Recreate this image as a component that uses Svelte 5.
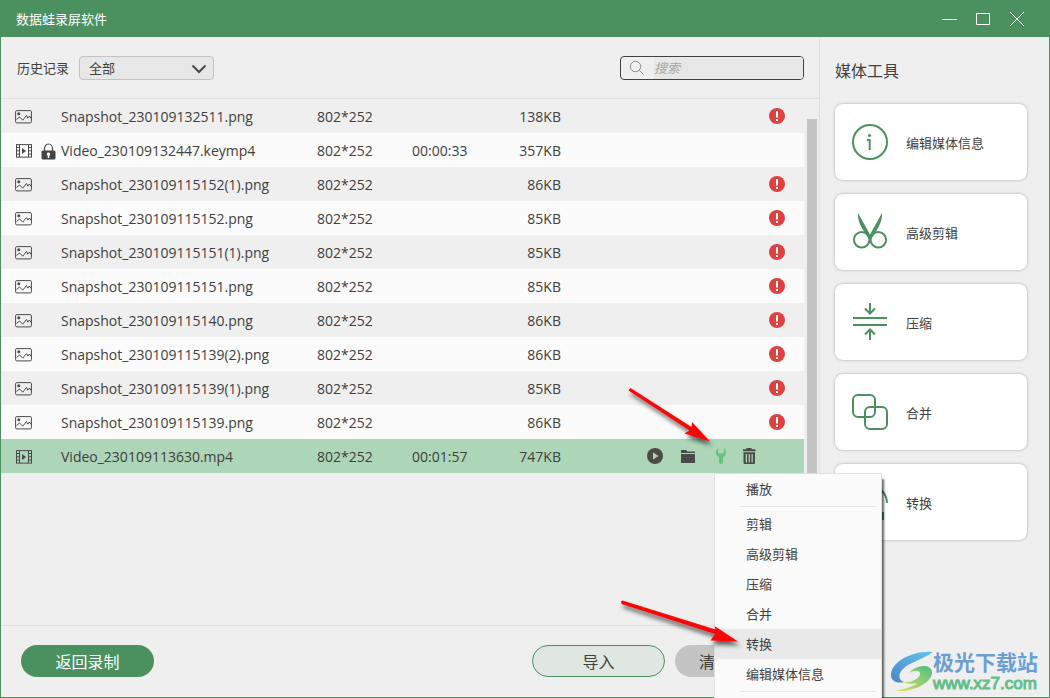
<script>
	// History entries
	let files = [
		{ name: 'Snapshot_230109132511.png', type: 'image', dimensions: '802*252', duration: '', size: '138KB', missing: true },
		{ name: 'Video_230109132447.keymp4', type: 'video', dimensions: '802*252', duration: '00:00:33', size: '357KB', locked: true },
		{ name: 'Snapshot_230109115152(1).png', type: 'image', dimensions: '802*252', duration: '', size: '86KB', missing: true },
		{ name: 'Snapshot_230109115152.png', type: 'image', dimensions: '802*252', duration: '', size: '85KB', missing: true },
		{ name: 'Snapshot_230109115151(1).png', type: 'image', dimensions: '802*252', duration: '', size: '85KB', missing: true },
		{ name: 'Snapshot_230109115151.png', type: 'image', dimensions: '802*252', duration: '', size: '85KB', missing: true },
		{ name: 'Snapshot_230109115140.png', type: 'image', dimensions: '802*252', duration: '', size: '86KB', missing: true },
		{ name: 'Snapshot_230109115139(2).png', type: 'image', dimensions: '802*252', duration: '', size: '86KB', missing: true },
		{ name: 'Snapshot_230109115139(1).png', type: 'image', dimensions: '802*252', duration: '', size: '85KB', missing: true },
		{ name: 'Snapshot_230109115139.png', type: 'image', dimensions: '802*252', duration: '', size: '86KB', missing: true },
		{ name: 'Video_230109113630.mp4', type: 'video', dimensions: '802*252', duration: '00:01:57', size: '747KB' }
	];

	let tools = [
		{ id: 'info', label: '编辑媒体信息' },
		{ id: 'cut', label: '高级剪辑' },
		{ id: 'compress', label: '压缩' },
		{ id: 'merge', label: '合并' },
		{ id: 'convert', label: '转换' }
	];

	// null draws a separator
	let menuItems = ['播放', null, '剪辑', '高级剪辑', '压缩', '合并', '转换', '编辑媒体信息', null];

	let selected = 'Video_230109113630.mp4';
	let activeItem = '转换';
	let menuOpen = true;
	let filter = 'all';
	let query = '';

	$: visibleFiles = files.filter(
		(f) => (filter === 'all' || f.type === filter) && f.name.toLowerCase().includes(query.toLowerCase())
	);
</script>

<div class="window">
	<header class="titlebar">
		<h1>数据蛙录屏软件</h1>
		<div class="window-controls">
			<button aria-label="最小化">
				<svg width="16" height="16" viewBox="0 0 16 16"><path d="M1 8.500h15" /></svg>
			</button>
			<button aria-label="最大化">
				<svg width="16" height="16" viewBox="0 0 16 16"><path d="M1.500 2.500h13v11h-13z" /></svg>
			</button>
			<button aria-label="关闭">
				<svg width="16" height="16" viewBox="0 0 16 16"><path d="M1 1l14 14M15 1L1 15" /></svg>
			</button>
		</div>
	</header>

	<div class="content">
		<main>
			<div class="toolbar">
				<label for="filter">历史记录</label>
				<div class="select-wrap">
					<select id="filter" bind:value={filter}>
						<option value="all">全部</option>
						<option value="image">图片</option>
						<option value="video">视频</option>
					</select>
					<svg class="chevron" width="16" height="10" viewBox="0 0 16 10"><path d="M1.500 1.500L8 8l6.500-6.500" /></svg>
				</div>
				<div class="search">
					<svg width="16" height="16" viewBox="0 0 16 16"><circle cx="6.500" cy="6.500" r="5.200" /><path d="M10.300 10.300L14.500 14.500" /></svg>
					<input type="text" placeholder="搜索" aria-label="搜索" bind:value={query} />
				</div>
			</div>

			<div class="history">
				<table>
					<tbody>
						{#each visibleFiles as file (file.name)}
							<tr class:selected={file.name === selected} on:click={() => (selected = file.name)}>
								<td class="col-icon">
									<div class="icons">
										{#if file.type === 'image'}
											<svg width="17" height="14" viewBox="0 0 17 14" fill="none" stroke="#4a4a4a">
												<rect x=".6" y=".6" width="15.800" height="12.300" rx="1.200" />
												<circle cx="3.800" cy="3.800" r="1.500" fill="#4a4a4a" stroke="none" />
												<path d="M1.500 9.500L4.500 7l3.200 3.200L11.500 5.500l1.300 2.700 1.600-2.200 1.800 2.500" />
											</svg>
										{:else}
											<svg width="17" height="14" viewBox="0 0 17 14" fill="none" stroke="#4a4a4a">
												<rect x="1.500" y=".6" width="15" height="12.500" />
												<path d="M4.500 1v12M13.500 1v12M1.500 3.500h3M1.500 6.800h3M1.500 10.100h3M13.500 3.500h3M13.500 6.800h3M13.500 10.100h3" />
												<path d="M7 4l4 3-4 3z" fill="#4a4a4a" stroke="none" />
											</svg>
										{/if}
										{#if file.locked}
											<svg width="15" height="17" viewBox="0 0 15 17">
												<path d="M3.500 8V5.500a4 4.500 0 0 1 8 0V8" fill="none" stroke="#4a4a4a" stroke-width="1.200" />
												<rect x=".5" y="7.500" width="14" height="9" rx="1.500" fill="#444" />
												<path d="M7.500 9.500a1.700 1.700 0 0 0-.8 3.200V15h1.600v-2.300a1.700 1.700 0 0 0-.8-3.200z" fill="#fff" />
											</svg>
										{/if}
									</div>
								</td>
								<td class="col-name">{file.name}</td>
								<td class="col-dimensions">{file.dimensions}</td>
								<td class="col-duration">{file.duration}</td>
								<td class="col-size">{file.size}</td>
								<td class="col-status">
									{#if file.missing}
										<div class="warning">
											<svg width="16" height="16" viewBox="0 0 16 16">
												<circle cx="8" cy="8" r="8" fill="#df4040" />
												<path d="M7 3h2v6.500H7zM7 11h2v2H7z" fill="#fff" />
											</svg>
										</div>
									{/if}
									{#if file.name === selected}
										<div class="actions">
											<div class="action-group">
												<button aria-label="播放">
													<svg width="16" height="16" viewBox="0 0 16 16"><circle cx="8" cy="8" r="8" fill="#4a4a4a" /><path d="M6 4.500l5.500 3.500L6 11.500z" fill="#add5b8" /></svg>
												</button>
												<button aria-label="打开文件夹">
													<svg width="16" height="16" viewBox="0 0 16 16" fill="#4a4a4a"><path d="M1 2h5l1.500 1.500H15V5H1zM1 6h14v9H1z" /></svg>
												</button>
												<div class="menu-anchor">
													<button aria-label="工具" aria-expanded={menuOpen} on:click={() => (menuOpen = !menuOpen)}>
														<svg width="16" height="16" viewBox="0 0 16 16" fill="#66c283"><path d="M5.200.2v4.300l1.300 1h3l1.300-1V.2C12.300 1 13 2.700 13 4.500c0 2-1.100 3.700-3 4.500V14a2 2 0 0 1-4 0V9C4.100 8.200 3 6.500 3 4.500 3 2.700 3.700 1 5.200.2z" /></svg>
													</button>
													{#if menuOpen}
														<div class="menu" role="menu">
															{#each menuItems as item}
																{#if item}
																	<button role="menuitem" class:active={item === activeItem}>{item}</button>
																{:else}
																	<hr />
																{/if}
															{/each}
														</div>
														<svg class="pointers" width="140" height="280" viewBox="0 0 140 280">
															<g class="pointer">
																<path d="M18.500 11.500L20.500 9 81.500 48 82 43 100 62.500 74.500 54.500 79.500 51.500z" />
																<path d="M11 222.500L12.500 221.500 105.500 250.500 104.500 247 128 262.500 100.500 261.500 105 255 11.500 225z" />
															</g>
														</svg>
													{/if}
												</div>
											</div>
											<button aria-label="删除">
												<svg width="16" height="16" viewBox="0 0 16 16" fill="#4a4a4a"><path d="M5.500 0h5v1.200H14.500V3.200H2V1.200h3.500zM2.500 4.200H14V15a1 1 0 0 1-1 1H3.500a1 1 0 0 1-1-1zM4.700 6v8.500H6V6zm2.900 0v8.500h1.300V6zm2.900 0v8.500h1.300V6z" fill-rule="evenodd" /></svg>
											</button>
										</div>
									{/if}
								</td>
							</tr>
						{/each}
					</tbody>
				</table>
				<div class="scrollbar"></div>
			</div>

			<footer>
				<button class="pill primary">返回录制</button>
				<button class="pill outline">导入</button>
				<button class="pill muted">清空</button>
			</footer>
		</main>

		<aside>
			<h2>媒体工具</h2>
			<div class="cards">
				{#each tools as tool}
					<button class="card">
						<svg width="36" height="36" viewBox="0 0 36 36" fill="none" stroke="#4b9160" stroke-width="2">
							{#if tool.id === 'info'}
								<circle cx="18" cy="18" r="17" />
								<circle cx="17.500" cy="11.500" r="1.600" fill="#4b9160" stroke="none" />
								<path d="M15 16h2.700v10" />
							{:else if tool.id === 'cut'}
								<circle cx="9.700" cy="25.800" r="7.800" />
								<circle cx="26.300" cy="25.800" r="7.800" />
								<path d="M6 -1C5.500 6 8 12 16.500 24.500L18 28l1.500-3.500C28 12 30.500 6 30 -1L18 20.500z" fill="#4b9160" stroke="none" />
							{:else if tool.id === 'compress'}
								<path d="M1 14h34M1 21h34M18 -1v10.500M13 4.500l5 5 5-5M18 36V25.500M13 30.500l5-5 5 5" />
							{:else if tool.id === 'merge'}
								<rect x="1" y="1" width="22" height="22" rx="5" />
								<rect x="13" y="13" width="22" height="22" rx="5" />
							{:else}
								<path d="M1 19A17 17 0 0 1 35 19M1 11v8h8M31 28v7h-9M4 28c6 8 18 9 27 1" />
							{/if}
						</svg>
						<span>{tool.label}</span>
					</button>
				{/each}
			</div>
		</aside>
	</div>

	<div class="watermark">
		<svg width="42" height="40" viewBox="0 0 42 40">
			<defs>
				<linearGradient id="swirl-blue" x1="0" y1="1" x2="1" y2="0">
					<stop offset="0" stop-color="#4d86c4" />
					<stop offset="1" stop-color="#62c6ee" />
				</linearGradient>
				<linearGradient id="swirl-green" x1="0" y1="1" x2="1" y2="0">
					<stop offset="0" stop-color="#e6df5a" />
					<stop offset="1" stop-color="#4fbd86" />
				</linearGradient>
			</defs>
			<path d="M42 1C22-1 0 11 0 24c0 6 6 9 13 7-6-2-6-8-1-13C19 11 31 9 42 1z" fill="url(#swirl-blue)" />
			<path d="M12 31c9 1 18-4 17-9-1-3-6-3-11 0 7-8 22-10 23-1 1 11-21 21-37 19 9-2 18-4 22-8-5 1-10 1-14-1z" fill="url(#swirl-green)" />
		</svg>
		<div class="watermark-text">
			<strong>极光下载站</strong>
			<span>www.xz7.com</span>
		</div>
	</div>
</div>

<style>
	:global(body) {
		margin: 0;
	}

	.window {
		position: relative;
		display: flex;
		flex-direction: column;
		min-height: 100vh;
		overflow: hidden;
		background: #efefef;
		color: #404040;
		font-family: 'Open Sans', 'Noto Sans CJK SC', sans-serif;
		font-size: 13px;
	}

	h1,
	h2,
	label,
	button,
	input,
	select {
		margin: 0;
		padding: 0;
		border: none;
		background: none;
		color: inherit;
		font-family: 'Noto Sans CJK SC', sans-serif;
		font-size: 13px;
		font-weight: 400;
	}

	svg {
		display: block;
		flex: none;
	}

	.titlebar {
		display: flex;
		align-items: center;
		justify-content: space-between;
		height: 37px;
		padding: 0 25px 0 16px;
		background: #4b9160;
		color: #fff;
	}

	.window-controls {
		display: flex;
		gap: 18px;
	}

	.window-controls svg {
		fill: none;
		stroke: #fff;
	}

	.content {
		flex: 1;
		display: flex;
		border: 1px solid #4b9160;
		border-top: none;
	}

	main {
		flex: 1;
		min-width: 0;
		display: flex;
		flex-direction: column;
	}

	.toolbar {
		display: flex;
		align-items: center;
		gap: 10px;
		height: 61px;
		padding: 0 15px 0 16px;
		border-bottom: 1px solid #e0e0e0;
	}

	.select-wrap {
		position: relative;
		width: 135px;
	}

	select {
		appearance: none;
		box-sizing: border-box;
		display: block;
		width: 100%;
		height: 24px;
		padding-left: 9px;
		border: 1px solid #c3c3c3;
		border-radius: 4px;
		background: #e7e7e7;
	}

	.chevron {
		position: absolute;
		top: 8px;
		right: 7px;
		fill: none;
		stroke: #4a4a4a;
		stroke-width: 2;
		pointer-events: none;
	}

	.search {
		box-sizing: border-box;
		display: flex;
		align-items: center;
		gap: 9px;
		width: 184px;
		height: 24px;
		margin-left: auto;
		padding-left: 8px;
		border: 1px solid #404040;
		border-radius: 4px;
		overflow: hidden;
	}

	.search svg {
		fill: none;
		stroke: #8a8a8a;
	}

	.search input {
		flex: 1;
		min-width: 0;
		height: 22px;
		background: #e7e7e7;
		outline: none;
	}

	.search input::placeholder {
		color: #a5a5a5;
		font-style: italic;
	}

	.history {
		flex: 1;
		display: flex;
		align-items: flex-start;
		gap: 3px;
		padding-right: 2px;
	}

	table {
		flex: 1;
		table-layout: fixed;
		border-collapse: collapse;
		font-size: 14px;
	}

	tr {
		height: 34px;
	}

	tr:nth-child(even) {
		background: #fbfbfb;
	}

	tr.selected {
		background: #add5b8;
	}

	td {
		height: 34px;
		padding: 0;
		white-space: nowrap;
	}

	.col-icon {
		width: 60px;
	}

	.icons {
		display: flex;
		align-items: center;
		gap: 9px;
		padding: 2px 0 0 14px;
	}

	.col-name {
		width: 256px;
	}

	.col-dimensions {
		width: 95px;
	}

	.col-duration {
		width: 80px;
	}

	.col-size {
		width: 69px;
		text-align: right;
	}

	.warning {
		display: flex;
		justify-content: flex-end;
		padding-right: 19px;
	}

	.actions {
		display: flex;
		align-items: center;
		justify-content: flex-end;
		gap: 12px;
		padding-right: 47px;
	}

	.action-group {
		display: flex;
		align-items: center;
		gap: 17px;
	}

	.menu-anchor {
		position: relative;
		display: flex;
		align-items: center;
		height: 34px;
	}

	.menu {
		position: absolute;
		z-index: 2;
		top: 100%;
		left: 1px;
		box-sizing: border-box;
		width: 168px;
		padding-bottom: 30px;
		border: 1px solid #e0e0e0;
		background: #fbfbfb;
		box-shadow: 3px 5px 2px -1px rgba(0, 0, 0, 0.6);
	}

	.menu button {
		display: block;
		width: 100%;
		height: 30px;
		padding-left: 31px;
		line-height: 30px;
		text-align: left;
	}

	.menu button.active {
		background: #e9e9e9;
	}

	.menu hr {
		height: 1px;
		margin: 2px 5px 2px 25px;
		border: none;
		background: #e6e6e6;
	}

	.pointers {
		position: absolute;
		z-index: 3;
		top: -60px;
		left: -103px;
		pointer-events: none;
	}

	.pointer {
		fill: #fb0606;
		filter: drop-shadow(2px 4px 2px rgba(0, 0, 0, 0.6));
	}

	.scrollbar {
		align-self: stretch;
		width: 10px;
		margin: 20px 0;
		background: #c4c4c4;
	}

	footer {
		display: flex;
		gap: 10px;
		padding: 19px 11px 20px 20px;
		border-top: 1px solid #e0e0e0;
	}

	.pill {
		box-sizing: border-box;
		width: 133px;
		height: 32px;
		border-radius: 16px;
		font-size: 16px;
		line-height: 30px;
	}

	.primary {
		margin-right: auto;
		background: #4b9160;
		color: #fff;
	}

	.outline {
		border: 1px solid #4b9160;
		background: #e0e7e2;
	}

	.muted {
		padding-left: 24px;
		background: #c4c4c4;
		text-align: left;
	}

	aside {
		box-sizing: border-box;
		width: 230px;
		padding: 21px 22px 0 15px;
		border-left: 1px solid #e0e0e0;
	}

	h2 {
		font-size: 16px;
		line-height: 24px;
	}

	.cards {
		display: flex;
		flex-direction: column;
		gap: 14px;
		margin-top: 22px;
	}

	.card {
		display: flex;
		align-items: center;
		gap: 18px;
		height: 76px;
		padding-left: 17px;
		border-radius: 8px;
		background: #fff;
		box-shadow: 0 0 3px rgba(0, 0, 0, 0.3);
	}

	.card svg {
		overflow: visible;
	}

	.watermark {
		position: absolute;
		right: 12px;
		bottom: 6px;
		display: flex;
		align-items: center;
		pointer-events: none;
	}

	.watermark-text {
		display: flex;
		flex-direction: column;
		font-family: 'Liberation Sans', 'Noto Sans CJK SC', sans-serif;
	}

	.watermark-text strong {
		color: #6b9ed3;
		font-size: 21px;
		line-height: 26px;
	}

	.watermark-text span {
		color: #63c088;
		font-size: 17px;
		line-height: 16px;
		-webkit-text-stroke: 1px #63c088;
	}
</style>
